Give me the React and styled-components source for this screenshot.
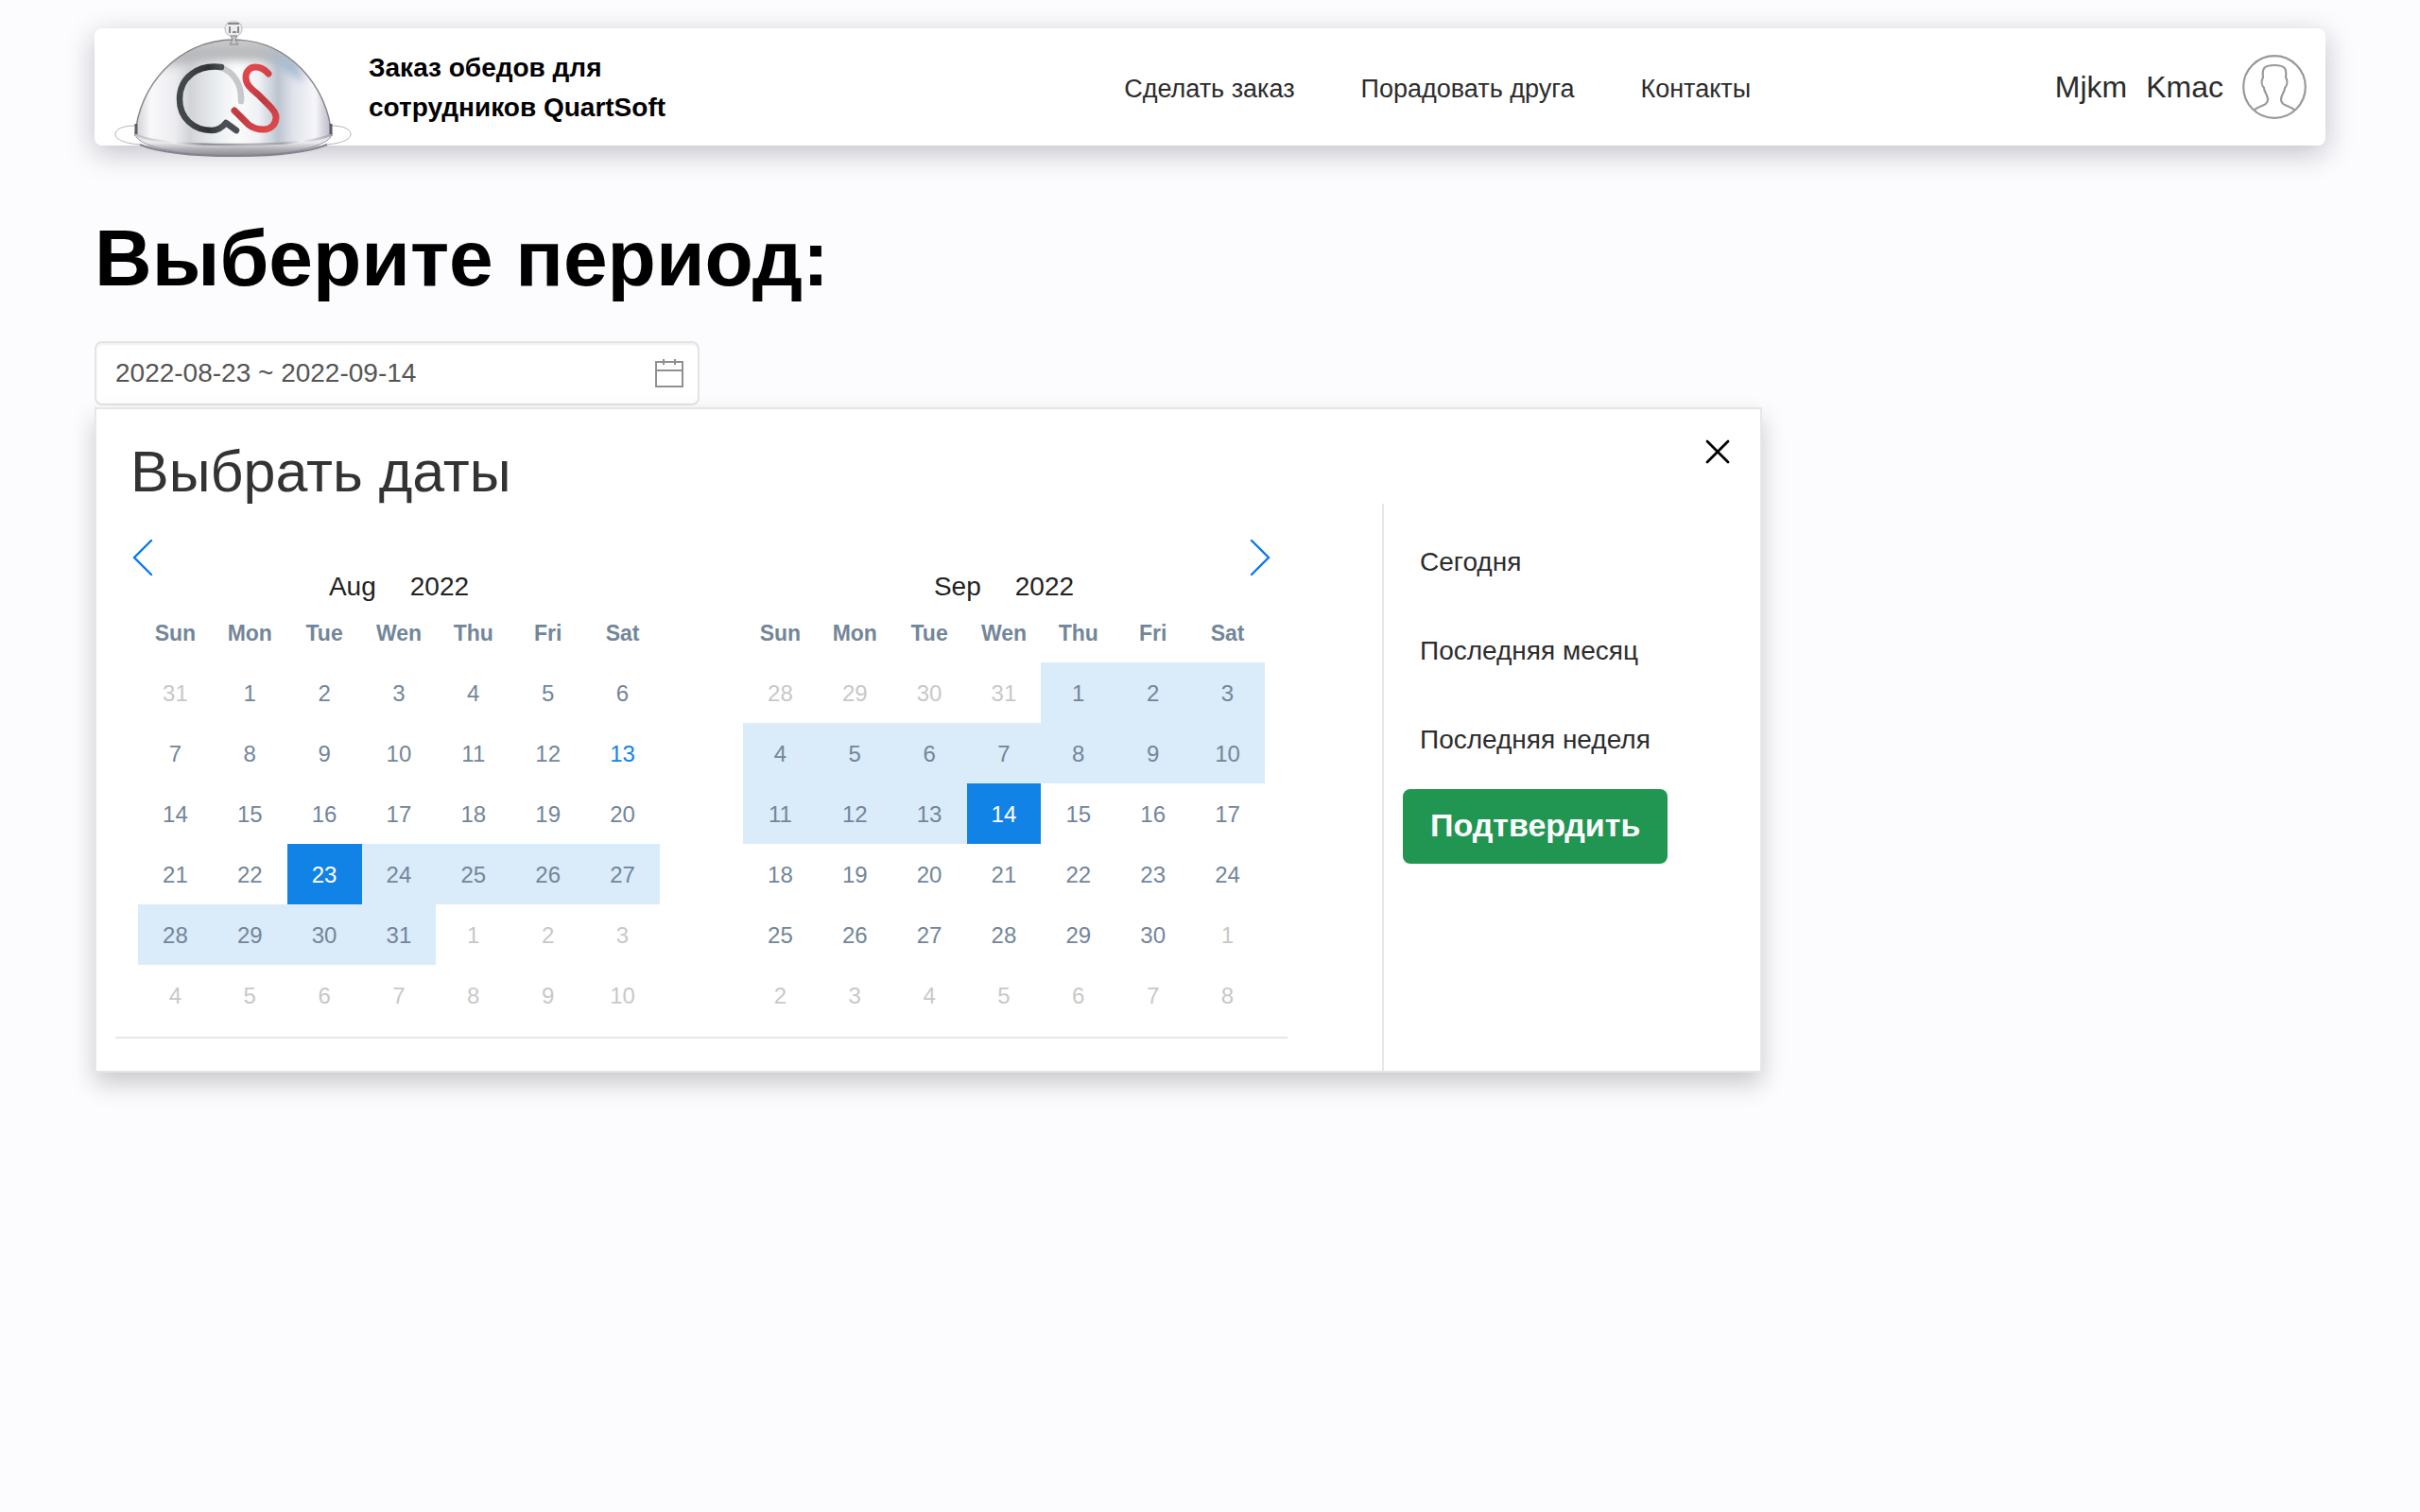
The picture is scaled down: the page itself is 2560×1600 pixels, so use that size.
import React, { useState } from "react";
import styled, { createGlobalStyle } from "styled-components";

const GlobalStyle = createGlobalStyle`
  * { box-sizing: border-box; }
  body {
    margin: 0;
    background: #fcfcfe;
    color: #2c2c2c;
    font-family: "Liberation Sans", Arial, sans-serif;
  }
  button, input { font-family: inherit; }
`;

const Page = styled.div`
  padding: 30px 100px 100px;
`;

const Header = styled.header`
  display: grid;
  grid-template-columns: 46% auto 1fr;
  align-items: center;
  min-height: 124px;
  padding: 0 20px;
  background: #fff;
  border-radius: 8px;
  box-shadow: 0 8px 30px rgba(20, 20, 50, 0.26);
`;

const Brand = styled.a`
  display: flex;
  align-items: center;
  gap: 18px;
  color: #000;
  text-decoration: none;
`;

const LogoArt = styled.svg`
  flex: none;
  width: 252px;
  height: 156px;
  margin: -16px 0;
`;

const BrandName = styled.span`
  max-width: 340px;
  padding-top: 2px;
  font-size: 28px;
  font-weight: 700;
  line-height: 42px;
`;

const Nav = styled.nav`
  display: flex;
  gap: 70px;
  padding: 4px 0 0 2px;
`;

const NavLink = styled.a`
  color: #2c2c2c;
  font-size: 27px;
  line-height: 32px;
  text-decoration: none;
  white-space: nowrap;
`;

const User = styled.a`
  display: flex;
  align-items: center;
  justify-content: flex-end;
  gap: 20px;
  color: #2c2c2c;
  font-size: 32px;
  line-height: 40px;
  text-decoration: none;
`;

const AvatarArt = styled.svg`
  flex: none;
  width: 68px;
  height: 68px;
`;

const Heading = styled.h1`
  margin: 68px 0 37px;
  color: #000;
  font-size: 84px;
  line-height: 102px;
`;

const DateField = styled.div`
  display: flex;
  align-items: center;
  width: 640px;
  height: 68px;
  padding: 0 15px 0 20px;
  background: #fff;
  border: 2px solid #e4e4e6;
  border-radius: 8px;
  box-shadow: inset 0 2px 2px rgba(0, 0, 0, 0.06);
`;

const DateInput = styled.input`
  flex: 1;
  min-width: 0;
  padding: 0;
  border: 0;
  outline: 0;
  background: transparent;
  color: #555;
  font-size: 28px;
  line-height: 36px;
`;

const IconButton = styled.button`
  display: flex;
  padding: 0;
  border: 0;
  background: none;
  cursor: pointer;
`;

const Picker = styled.section`
  width: fit-content;
  margin-top: 2px;
  background: #fff;
  border: 2px solid #e6e6e6;
  box-shadow: 0 12px 24px rgba(0, 0, 0, 0.2);
`;

const PickerHead = styled.div`
  display: flex;
  justify-content: space-between;
  align-items: flex-start;
  height: 100px;
  padding: 30px 31px 0 36px;
`;

const PickerTitle = styled.h2`
  margin: 0;
  color: #333;
  font-size: 61px;
  font-weight: 400;
  line-height: 72px;
`;

const PickerBody = styled.div`
  display: flex;
`;

const Months = styled.div`
  margin: 0 100px 34px 20px;
  padding: 38px 18px 12px;
  border-bottom: 2px solid #e6e6e6;
`;

const Arrows = styled.div`
  display: flex;
  justify-content: space-between;
`;

const MonthRow = styled.div`
  display: flex;
  gap: 88px;
  padding: 0 6px;
`;

const MonthTable = styled.table`
  width: 552px;
  table-layout: fixed;
  border-collapse: collapse;
`;

const Caption = styled.caption`
  padding-bottom: 6px;
  color: #222;
  font-size: 28px;
  line-height: 24px;
`;

const Year = styled.span`
  margin-left: 36px;
`;

const WeekDay = styled.th`
  height: 62px;
  padding: 0;
  color: #738699;
  font-size: 23px;
  font-weight: 700;
`;

const DayCell = styled.td`
  height: 64px;
  padding: 0;
  background: ${(p) => (p.$state === "end" ? "#1283e6" : p.$state === "range" ? "#daebf9" : "transparent")};
`;

const dayColors = { end: "#fff", range: "#738699", other: "#c8c8c8", today: "#1283e6" };

const DayButton = styled.button`
  display: block;
  width: 100%;
  height: 64px;
  padding: 2px 0 0;
  border: 0;
  background: none;
  color: ${(p) => dayColors[p.$state] || "#738699"};
  font-size: 24px;
  cursor: pointer;
`;

const Presets = styled.div`
  display: flex;
  flex-direction: column;
  align-items: flex-start;
  width: 400px;
  padding: 14px 20px 0;
  border-left: 2px solid #e6e6e6;
`;

const Preset = styled.button`
  height: 94px;
  padding: 2px 18px 0;
  border: 0;
  background: none;
  color: #2c2c2c;
  font-size: 28px;
  cursor: pointer;
`;

const Confirm = styled.button`
  height: 79px;
  margin-top: 6px;
  padding: 0 29px 2px;
  border: 0;
  border-radius: 8px;
  background: #219653;
  color: #fff;
  font-size: 34px;
  font-weight: 700;
  cursor: pointer;
`;

function Logo() {
  return (
    <LogoArt viewBox="0 0 252 156" fill="none" aria-hidden="true">
      <defs>
        <linearGradient id="dome" x1="23" x2="230" y1="0" y2="0" gradientUnits="userSpaceOnUse">
          <stop offset="0" stopColor="#d0d0d4" />
          <stop offset="0.08" stopColor="#f8f8fa" />
          <stop offset="0.2" stopColor="#ededf1" />
          <stop offset="0.28" stopColor="#d2d3d7" />
          <stop offset="0.4" stopColor="#e8ebee" />
          <stop offset="0.52" stopColor="#fbfbfb" />
          <stop offset="0.63" stopColor="#eff1f4" />
          <stop offset="0.73" stopColor="#bcc5d0" />
          <stop offset="0.81" stopColor="#e2e4ec" />
          <stop offset="0.92" stopColor="#f6f6fa" />
          <stop offset="1" stopColor="#b8b6c4" />
        </linearGradient>
        <linearGradient id="cap" x1="0" x2="0" y1="28" y2="62" gradientUnits="userSpaceOnUse">
          <stop offset="0" stopColor="#cacacc" />
          <stop offset="0.55" stopColor="#b4b5b8" />
          <stop offset="1" stopColor="#b4b5b8" stopOpacity="0" />
        </linearGradient>
        <linearGradient id="tray" x1="0" x2="0" y1="124" y2="152" gradientUnits="userSpaceOnUse">
          <stop offset="0" stopColor="#d9d9dd" />
          <stop offset="0.45" stopColor="#ececf0" />
          <stop offset="0.7" stopColor="#b1b1b7" />
          <stop offset="1" stopColor="#85838d" />
        </linearGradient>
        <linearGradient id="rim" x1="23" x2="230" y1="0" y2="0" gradientUnits="userSpaceOnUse">
          <stop offset="0" stopColor="#bdbdc2" />
          <stop offset="0.2" stopColor="#eeeef0" />
          <stop offset="0.35" stopColor="#8b8b91" />
          <stop offset="0.6" stopColor="#b5b5ba" />
          <stop offset="0.75" stopColor="#a0a0a7" />
          <stop offset="0.85" stopColor="#f0f0f4" />
          <stop offset="1" stopColor="#a5a2af" />
        </linearGradient>
        <linearGradient id="red" x1="130" x2="172" y1="60" y2="124" gradientUnits="userSpaceOnUse">
          <stop offset="0" stopColor="#e8494f" />
          <stop offset="0.55" stopColor="#bf3a40" />
          <stop offset="1" stopColor="#e4494e" />
        </linearGradient>
        <linearGradient id="dark" x1="80" x2="114" y1="0" y2="0" gradientUnits="userSpaceOnUse">
          <stop offset="0" stopColor="#42464b" />
          <stop offset="0.6" stopColor="#2e3135" />
          <stop offset="1" stopColor="#4b4f54" />
        </linearGradient>
        <filter id="soft" x="-5%" y="-5%" width="110%" height="110%">
          <feGaussianBlur stdDeviation="0.6" />
        </filter>
        <filter id="haze" x="-10%" y="-20%" width="120%" height="140%">
          <feGaussianBlur stdDeviation="4" />
        </filter>
        <clipPath id="shell">
          <path d="M23 130C26 78 68 28 127 28s100 50 104 102z" />
        </clipPath>
      </defs>
      <g filter="url(#soft)">
        <path d="M23 119C9 119 2 123 2 128c0 6 11 10 27 11M230 119c14 0 21 4 21 9 0 6-11 10-27 11" stroke="#b4b4ba" />
        <path d="M23 127c0 14 48 24 104 24s104-10 104-24z" fill="url(#tray)" stroke="#908e99" />
        <path d="M23 130C26 78 68 28 127 28s100 50 104 102c-18 7-60 10-104 10S38 137 23 130z" fill="url(#dome)" />
        <g clipPath="url(#shell)">
          <path filter="url(#haze)" d="M28 82C50 18 90 18 127 18s76 0 100 64c-30-30-60-32-100-32s-66 4-99 32z" fill="url(#cap)" />
          <path filter="url(#haze)" d="M160 42l34 8 8 24-22-14z" fill="#a9bdd2" />
        </g>
        <path d="M23 130C26 78 68 28 127 28s100 50 104 102" stroke="#85858b" strokeWidth="1.4" />
        <path d="M23 128c17 9 60 11 104 11s87-2 104-11" stroke="url(#rim)" strokeWidth="2.5" />
        <path d="M28 139c22 9 56 12 99 12s77-3 99-12" stroke="#85838d" strokeWidth="2" />
        <path d="M24 117v11M230 117v11" stroke="#5b5a63" strokeWidth="3" />
        <rect x="118" y="9" width="18" height="15" rx="7" fill="#ededf0" stroke="#b9b9bc" />
        <path d="M121 11h12M123 14v7M132 14v7M126 20h4" stroke="#88888b" strokeWidth="2" />
        <path d="M124 24h7l-2 4 3 5h-9l3-5z" fill="#c5c5c8" stroke="#88888b" />
        <path d="M113 57c14 5 23 18 22 36" stroke="#c6c8cc" strokeWidth="6.5" strokeLinecap="round" />
        <path d="M114 57C89 54 70 68 70 91c0 20 15 33 34 33 6 0 11-3 15-8l11 8" stroke="url(#dark)" strokeWidth="6.5" strokeLinecap="round" strokeLinejoin="round" />
        <path d="M164 64c-5-6-10-7-14-7-6 0-10 5-10 11 0 8 7 13 13 18l12 12c5 5 7 8 7 12 0 8-6 13-13 13-7 0-11-1-16-5l-15-15" stroke="url(#red)" strokeWidth="7" strokeLinecap="round" strokeLinejoin="round" />
      </g>
    </LogoArt>
  );
}

function Avatar() {
  return (
    <AvatarArt viewBox="0 0 68 68" fill="none" stroke="#999" strokeWidth="2.2" aria-hidden="true">
      <circle cx="34" cy="34" r="32.8" />
      <path d="M13 58C20 53 27 54 27 47c0-5-4-7-4-12-2-2-3-6-2-9l1-2c-1-9 0-13 12-13s13 4 12 13l1 2c1 3 0 7-2 9 0 5-4 7-4 12 0 7 7 6 14 11" />
    </AvatarArt>
  );
}

function CalendarIcon() {
  return (
    <svg width="30" height="32" viewBox="0 0 30 32" fill="none" stroke="#909090" strokeWidth="2" aria-hidden="true">
      <path d="M1 4h28v26H1zM1 13h28M9 1v6M21 1v6" />
    </svg>
  );
}

function Chevron({ back }) {
  return (
    <svg width="22" height="38" viewBox="0 0 22 38" fill="none" stroke="#0a78ea" strokeWidth="2.4" strokeLinecap="round" aria-hidden="true">
      <path d={back ? "M20 1 2 19l18 18" : "M2 1l18 18L2 37"} />
    </svg>
  );
}

function CloseIcon() {
  return (
    <svg width="28" height="28" viewBox="0 0 28 28" stroke="#000" strokeWidth="2.8" strokeLinecap="round" aria-hidden="true">
      <path d="M3 4l22 22M25 4 3 26" />
    </svg>
  );
}

const weekDays = ["Sun", "Mon", "Tue", "Wen", "Thu", "Fri", "Sat"];
const months = [
  { name: "Aug", year: 2022, lead: 1, previous: 31, length: 31, from: 23, to: 31, end: 23, today: 13 },
  { name: "Sep", year: 2022, lead: 4, previous: 31, length: 30, from: 1, to: 14, end: 14 },
];

function dayAt(month, index) {
  const n = index - month.lead + 1;
  if (n < 1) return { label: month.previous + n, state: "other" };
  if (n > month.length) return { label: n - month.length, state: "other" };
  if (n === month.end) return { label: n, state: "end" };
  if (n >= month.from && n <= month.to) return { label: n, state: "range" };
  return { label: n, state: n === month.today ? "today" : "plain" };
}

function Month({ month }) {
  return (
    <MonthTable>
      <Caption>
        {month.name}
        <Year>{month.year}</Year>
      </Caption>
      <thead>
        <tr>
          {weekDays.map((d) => (
            <WeekDay key={d} scope="col">{d}</WeekDay>
          ))}
        </tr>
      </thead>
      <tbody>
        {[0, 1, 2, 3, 4, 5].map((week) => (
          <tr key={week}>
            {weekDays.map((d, i) => {
              const { label, state } = dayAt(month, week * 7 + i);
              return (
                <DayCell key={d} $state={state}>
                  <DayButton type="button" $state={state}>{label}</DayButton>
                </DayCell>
              );
            })}
          </tr>
        ))}
      </tbody>
    </MonthTable>
  );
}

export default function App() {
  const [period, setPeriod] = useState("2022-08-23 ~ 2022-09-14");
  return (
    <>
      <GlobalStyle />
      <Page>
        <Header>
          <Brand href="#">
            <Logo />
            <BrandName>Заказ обедов для сотрудников QuartSoft</BrandName>
          </Brand>
          <Nav>
            <NavLink href="#order">Сделать заказ</NavLink>
            <NavLink href="#gift">Порадовать друга</NavLink>
            <NavLink href="#contacts">Контакты</NavLink>
          </Nav>
          <User href="#profile">
            <span>Mjkm</span>
            <span>Kmac</span>
            <Avatar />
          </User>
        </Header>
        <main>
          <Heading id="period-label">Выберите период:</Heading>
          <DateField>
            <DateInput
              type="text"
              aria-labelledby="period-label"
              value={period}
              onChange={(e) => setPeriod(e.target.value)}
            />
            <IconButton type="button" aria-label="Календарь">
              <CalendarIcon />
            </IconButton>
          </DateField>
          <Picker>
            <PickerHead>
              <PickerTitle>Выбрать даты</PickerTitle>
              <IconButton type="button" aria-label="Закрыть">
                <CloseIcon />
              </IconButton>
            </PickerHead>
            <PickerBody>
              <Months>
                <Arrows>
                  <IconButton type="button" aria-label="Назад">
                    <Chevron back />
                  </IconButton>
                  <IconButton type="button" aria-label="Вперёд">
                    <Chevron />
                  </IconButton>
                </Arrows>
                <MonthRow>
                  {months.map((m) => (
                    <Month key={m.name} month={m} />
                  ))}
                </MonthRow>
              </Months>
              <Presets>
                <Preset type="button">Сегодня</Preset>
                <Preset type="button">Последняя месяц</Preset>
                <Preset type="button">Последняя неделя</Preset>
                <Confirm type="button">Подтвердить</Confirm>
              </Presets>
            </PickerBody>
          </Picker>
        </main>
      </Page>
    </>
  );
}
